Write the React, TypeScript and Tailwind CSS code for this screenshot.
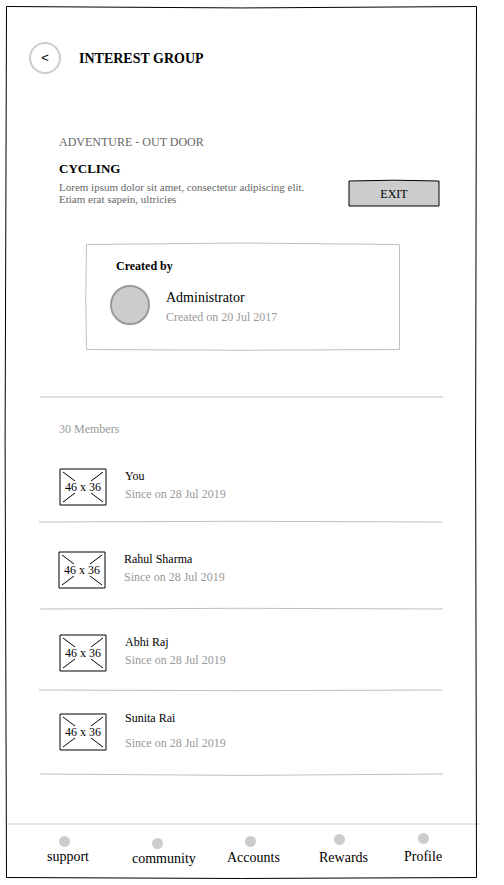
type Member = {
  name: string;
  since: string;
  row: string;
  gap: string;
  rule: string;
  path: string;
};

const members: Member[] = [
  { name: "You", since: "Since on 28 Jul 2019", row: "mt-8 ml-[59px]", gap: "pt-px gap-1", rule: "mt-[15px] ml-[39px]", path: "M0 1 Q201.5 -0.4 403 1" },
  { name: "Rahul Sharma", since: "Since on 28 Jul 2019", row: "mt-7 ml-[58px]", gap: "pt-px gap-1", rule: "mt-[19px] ml-10", path: "M0 1 Q201.5 -0.4 403 1" },
  { name: "Abhi Raj", since: "Since on 28 Jul 2019", row: "mt-6 ml-[59px]", gap: "pt-px gap-1", rule: "mt-[17px] ml-[39px]", path: "M0 1 Q201.5 2.4 403 1" },
  { name: "Sunita Rai", since: "Since on 28 Jul 2019", row: "mt-[22px] ml-[59px]", gap: "-mt-[2px] gap-[11px]", rule: "mt-[22px] ml-10", path: "M0 1 Q201.5 3.8 403 1" },
];

const tabs = [
  { label: "support", item: "ml-[47px] mt-[11px] w-[42px]", dot: "ml-3", gap: "mt-[2px]" },
  { label: "community", item: "ml-[43px] mt-[13px] w-[64px]", dot: "ml-5", gap: "mt-[2px]" },
  { label: "Accounts", item: "ml-[31px] mt-[11px] w-[53px]", dot: "ml-[18px]", gap: "mt-[3px]" },
  { label: "Rewards", item: "ml-[39px] mt-[9px] w-[50px]", dot: "ml-[15px]", gap: "mt-[5px]" },
  { label: "Profile", item: "ml-[35px] mt-[8px] w-[40px]", dot: "ml-[14px]", gap: "mt-[5px]" },
];

function Rule({ className, path }: { className: string; path: string }) {
  return (
    <svg className={`block h-[2px] w-[403px] shrink-0 overflow-visible ${className}`} viewBox="0 0 403 2" fill="none">
      <path d={path} stroke="#c0c0c0" />
    </svg>
  );
}

function Placeholder() {
  return (
    <div className="relative flex h-[38px] w-12 shrink-0 items-center justify-center">
      <svg className="absolute inset-0 h-[38px] w-12" viewBox="0 0 48 38" fill="none" stroke="#000" strokeLinejoin="round">
        <rect x="1" y="1" width="46" height="36" />
        <path d="M4 4L16 13M32 13L44 4M4 34L16 25M32 25L44 34" />
      </svg>
      <span className="relative text-xs leading-[14px] whitespace-nowrap">46 x 36</span>
    </div>
  );
}

function MemberRow({ member }: { member: Member }) {
  return (
    <>
      <div className={`flex h-[38px] items-start gap-[18px] ${member.row}`}>
        <Placeholder />
        <div className={`flex flex-col text-xs leading-[14px] ${member.gap}`}>
          <span>{member.name}</span>
          <span className="text-[#999999]">{member.since}</span>
        </div>
      </div>
      <Rule className={member.rule} path={member.path} />
    </>
  );
}

export default function App() {
  return (
    <div className="relative flex h-[885px] w-[504px] flex-col overflow-hidden bg-white font-['Liberation_Serif',serif] text-black">
      <svg className="absolute inset-0 h-[885px] w-[504px]" viewBox="0 0 504 885" fill="none">
        <path d="M6.5 6.5Q241.5 9.4 476.5 6.5Q474.7 442 476.5 877.5Q241.5 879.5 6.5 877.5Q3.7 442 6.5 6.5Z" stroke="#000" />
      </svg>

      <header className="mt-[42px] ml-[29px] flex h-8 items-center gap-[18px]">
        <button className="flex size-8 items-center justify-center rounded-full border-2 border-[#cccccc] font-['Liberation_Sans',sans-serif] text-[13px] leading-[14px]">
          &lt;
        </button>
        <h1 className="pt-[2px] text-sm leading-4 font-bold">INTEREST GROUP</h1>
      </header>

      <section className="mt-[61px] ml-[59px] flex h-[72px] w-[381px] items-end justify-between">
        <div className="flex h-[72px] flex-col">
          <span className="text-xs leading-[14px] text-[#666666]">ADVENTURE - OUT DOOR</span>
          <h2 className="mt-3 text-[13px] leading-[15px] font-bold">CYCLING</h2>
          <p className="mt-[5px] text-[11px] leading-3 whitespace-nowrap text-[#666666]">
            Lorem ipsum dolor sit amet, consectetur adipiscing elit.
            <br />
            Etiam erat sapein, ultricies
          </p>
        </div>
        <button className="relative flex h-[27px] w-[92px] items-center justify-center">
          <svg className="absolute inset-0 h-[27px] w-[92px] overflow-visible" viewBox="0 0 92 27">
            <path d="M1 1Q46 -0.6 91 1L91 26L1 26Z" fill="#cccccc" stroke="#000" strokeLinejoin="round" />
          </svg>
          <span className="relative text-xs leading-[14px]">EXIT</span>
        </button>
      </section>

      <section className="relative mt-[37px] ml-[86px] flex h-[106px] w-[314px] flex-col">
        <svg className="absolute inset-0 h-[106px] w-[314px] overflow-visible" viewBox="0 0 314 106" fill="none">
          <path d="M0.5 0.5Q157 -2.5 313.5 0.5L313.5 105.5Q157 107 0.5 105.5Q-1 53 0.5 0.5Z" stroke="#c0c0c0" />
        </svg>
        <h3 className="mt-[15px] ml-[30px] text-xs leading-[14px] font-bold">Created by</h3>
        <div className="mt-3 ml-6 flex gap-4">
          <div className="size-10 rounded-full border-2 border-[#999999] bg-[#cccccc]" />
          <div className="flex flex-col pt-[5px]">
            <span className="text-sm leading-4">Administrator</span>
            <span className="mt-1 text-xs leading-[14px] text-[#999999]">Created on 20 Jul 2017</span>
          </div>
        </div>
      </section>

      <Rule className="mt-[46px] ml-10" path="M0 1H403" />

      <main className="flex flex-col">
        <span className="mt-6 ml-[59px] text-xs leading-[14px] text-[#999999]">30 Members</span>
        {members.map((m) => (
          <MemberRow key={m.name} member={m} />
        ))}
      </main>

      <nav className="mt-12 flex flex-col">
        <svg className="ml-2 block h-[2px] w-[471px]" viewBox="0 0 471 2">
          <path d="M0 1H471" stroke="#cccccc" />
        </svg>
        <div className="flex items-start">
          {tabs.map((tab) => (
            <a key={tab.label} className={`flex shrink-0 flex-col ${tab.item}`}>
              <span className={`size-[11px] rounded-full bg-[#cccccc] ${tab.dot}`} />
              <span className={`text-sm leading-4 ${tab.gap}`}>{tab.label}</span>
            </a>
          ))}
        </div>
      </nav>
    </div>
  );
}
